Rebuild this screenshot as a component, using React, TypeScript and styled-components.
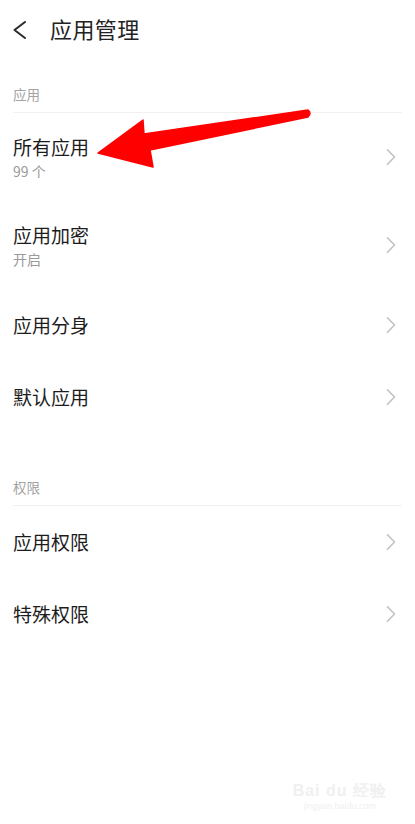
import styled, { createGlobalStyle } from "styled-components";

const GlobalStyle = createGlobalStyle`
  html, body {
    margin: 0;
    padding: 0;
    background: #fff;
  }
  body {
    font-family: "Noto Sans CJK SC", "Noto Sans", sans-serif;
  }
`;

const Page = styled.div`
  position: relative;
  width: 415px;
  height: 824px;
  overflow: hidden;
  background: #fff;
`;

const TopBar = styled.div`
  align-items: center;
  box-sizing: border-box;
  display: flex;
  height: 56px;
  padding: 0 13px;
  padding-top: 4px;
`;

const BackButton = styled.button`
  align-items: center;
  background: none;
  border: 0;
  display: flex;
  height: 24px;
  margin-right: 24px;
  padding: 0;
  width: 13px;
`;

const Title = styled.h1`
  color: #222;
  font-size: 22px;
  font-weight: 400;
  letter-spacing: 0.4px;
  margin: 0;
  margin-top: -4px;
`;

const Section = styled.section<{ $first?: boolean }>`
  display: flex;
  flex-direction: column;
  padding-top: ${(p) => (p.$first ? "0" : "16px")};
`;

const SectionHeader = styled.div`
  align-items: flex-end;
  border-bottom: 1px solid #f1f1f1;
  box-sizing: border-box;
  color: #a3a3a3;
  display: flex;
  font-size: 13.5px;
  height: 57px;
  line-height: 18px;
  margin: 0 13px;
  padding-bottom: 9px;
`;

const Row = styled.div<{ $tall?: boolean }>`
  align-items: center;
  box-sizing: border-box;
  display: flex;
  height: ${(p) => (p.$tall ? "88px" : "72px")};
  justify-content: space-between;
  padding: 0 19px 0 13px;
`;

const RowText = styled.div`
  display: flex;
  flex-direction: column;
`;

const RowTitle = styled.span`
  color: #1c1c1c;
  font-size: 19px;
  line-height: 24px;
`;

const RowSub = styled.span`
  color: #9a9a9a;
  font-size: 14px;
  line-height: 18px;
  margin-top: 3px;
`;

const ArrowOverlay = styled.svg`
  left: 0;
  pointer-events: none;
  position: absolute;
  top: 0;
`;

const Watermark = styled.div`
  align-items: center;
  bottom: 12px;
  color: #f0f0f0;
  display: flex;
  flex-direction: column;
  font-family: "Liberation Sans", sans-serif;
  position: absolute;
  right: 28px;
`;

const WatermarkLogo = styled.span`
  font-size: 16px;
  font-weight: 700;
  letter-spacing: 1px;
  line-height: 18px;
`;

const WatermarkUrl = styled.span`
  font-size: 9px;
  line-height: 12px;
`;

function Chevron() {
  return (
    <svg width="10" height="16" viewBox="0 0 10 16" fill="none">
      <path
        d="M1.5 0.8 L8.5 8 L1.5 15.2"
        stroke="#c2c2c2"
        strokeWidth="1.6"
        strokeLinecap="round"
        strokeLinejoin="round"
      />
    </svg>
  );
}

type Item = { title: string; sub?: string };

const appItems: Item[] = [
  { title: "所有应用", sub: "99 个" },
  { title: "应用加密", sub: "开启" },
  { title: "应用分身" },
  { title: "默认应用" },
];

const permItems: Item[] = [{ title: "应用权限" }, { title: "特殊权限" }];

const renderRow = (item: Item) => (
  <Row key={item.title} $tall={Boolean(item.sub)}>
    <RowText>
      <RowTitle>{item.title}</RowTitle>
      {item.sub && <RowSub>{item.sub}</RowSub>}
    </RowText>
    <Chevron />
  </Row>
);

export default function App() {
  return (
    <Page>
      <GlobalStyle />
      <TopBar>
        <BackButton aria-label="back">
          <svg width="13" height="18" viewBox="0 0 13 18" fill="none">
            <path
              d="M12 1 L1.5 9 L12 17"
              stroke="#2a2a2a"
              strokeWidth="2"
              strokeLinecap="round"
              strokeLinejoin="round"
            />
          </svg>
        </BackButton>
        <Title>应用管理</Title>
      </TopBar>

      <Section $first>
        <SectionHeader>应用</SectionHeader>
        {appItems.map(renderRow)}
      </Section>

      <Section>
        <SectionHeader>权限</SectionHeader>
        {permItems.map(renderRow)}
      </Section>

      <ArrowOverlay width="415" height="824" viewBox="0 0 415 824">
        <path
          d="M308 110 Q312 113 308 117 L150 150 L153 167 L98 153 L143 120 L144 134 Z"
          fill="#ff0000"
          stroke="#ff0000"
          strokeWidth="1.5"
          strokeLinejoin="round"
        />
      </ArrowOverlay>

      <Watermark>
        <WatermarkLogo>Bai du 经验</WatermarkLogo>
        <WatermarkUrl>jingyan.baidu.com</WatermarkUrl>
      </Watermark>
    </Page>
  );
}
